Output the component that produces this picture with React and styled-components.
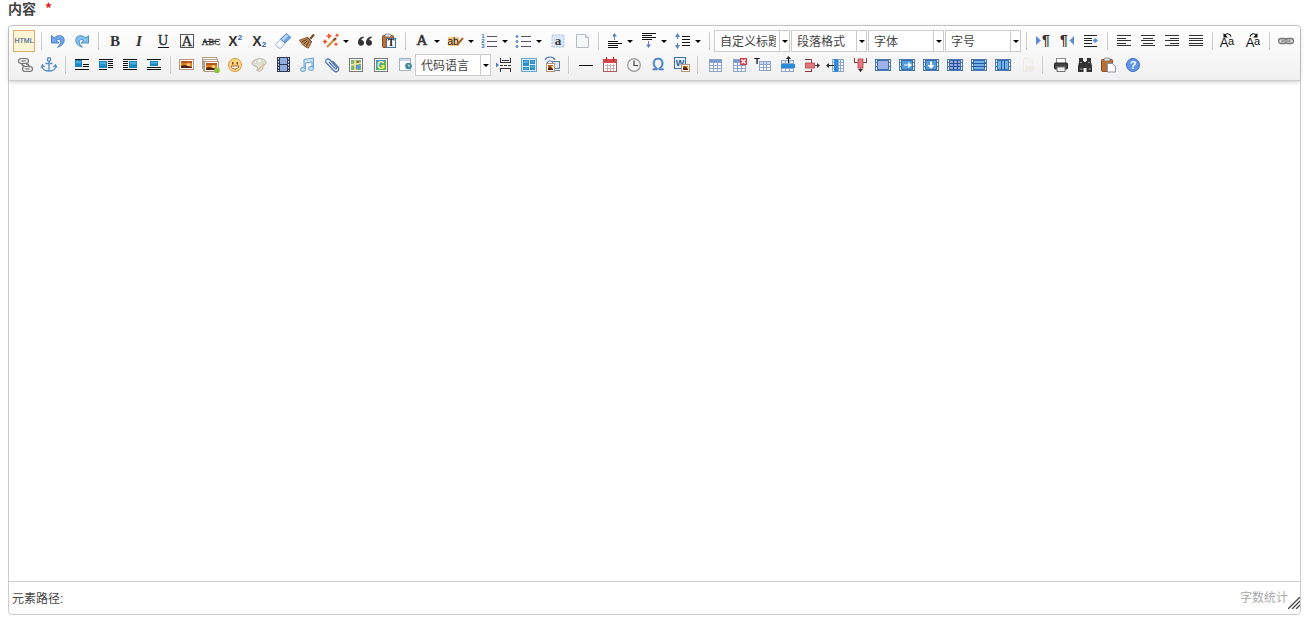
import React from "react";
import styled, { createGlobalStyle } from "styled-components";

const sans = '"Liberation Sans", "Noto Sans CJK SC", sans-serif';
const serif = "Liberation Serif, serif";

const GlobalStyle = createGlobalStyle`
  *, *::before, *::after { box-sizing: border-box; }
  body { margin: 0; background: #fff; color: #444; font: 12px/16px ${sans}; }
`;

const Page = styled.main`
  display: flex;
  flex-direction: column;
  min-height: 100vh;
  padding: 0 5px 5px 8px;
`;

const FieldLabel = styled.label`
  margin-bottom: 9px;
  font: bold 14px/16px "Noto Sans CJK SC", sans-serif;
  color: #444;
`;

const Required = styled.span`
  margin-left: 9px;
  color: #e02020;
`;

const Editor = styled.section`
  display: flex;
  flex: 1;
  flex-direction: column;
  border: 1px solid #ccc;
  border-radius: 4px;
`;

const Toolbar = styled.div`
  display: flex;
  flex-wrap: wrap;
  padding: 3px 2px 3px 4px;
  border-bottom: 1px solid #ccc;
  border-radius: 4px 4px 0 0;
  background: linear-gradient(#fff, #f0f0f0);
  box-shadow: 0 1px 4px rgba(0, 0, 0, 0.2);
`;

const ToolButton = styled.button`
  display: flex;
  align-items: center;
  justify-content: center;
  width: ${(p) => (p.$active ? "22px" : p.$menu ? "34px" : "24px")};
  height: ${(p) => (p.$active ? "22px" : "24px")};
  margin: ${(p) => (p.$active ? "1px 2px 1px 0" : "0")};
  padding: 0;
  border: ${(p) => (p.$active ? "1px solid #dcac6c" : "0")};
  background: ${(p) => (p.$active ? "#fff5d4" : "transparent")};
`;

const Glyph = styled.svg`
  display: block;
  flex: none;
  width: 20px;
  height: 20px;
  overflow: visible;
`;

const Caret = styled.span`
  width: 6px;
  margin: 1px 2px 0 2px;
  border: solid transparent;
  border-width: 3px 3px 0;
  border-top-color: #000;
`;

const Separator = styled.span`
  width: 1px;
  height: 18px;
  margin: 3px 4px;
  background: #ccc;
`;

const Combo = styled.span`
  display: grid;
  width: 76px;
  height: 22px;
  margin: 1px 1px 1px 0;
  border: 1px solid #ccc;
  background: #fff;
`;

const ComboSelect = styled.select`
  grid-area: 1 / 1;
  width: 100%;
  height: 20px;
  padding: 1px 13px 0 5px;
  border: 0;
  appearance: none;
  background: #fff;
  color: #444;
  font: 12px/18px ${sans};
  text-overflow: clip;
`;

const ComboArrow = styled.span`
  display: flex;
  grid-area: 1 / 1;
  align-items: center;
  justify-content: center;
  justify-self: end;
  width: 10px;
  border-left: 1px solid #ccc;
  pointer-events: none;

  ${Caret} { margin: 0; }
`;

const Content = styled.textarea`
  flex: 1;
  width: 100%;
  min-height: 200px;
  padding: 8px;
  border: 0;
  outline: 0;
  background: transparent;
  resize: none;
  font: 16px/24px ${sans};
`;

const StatusBar = styled.footer`
  display: flex;
  justify-content: space-between;
  height: 33px;
  padding: 0 0 0 3px;
  border-top: 1px solid #ccc;
`;

const ElementPath = styled.span`
  line-height: 34px;
`;

const StatusEnd = styled.div`
  display: flex;
  align-items: flex-end;
  color: #aaa;
`;

const WordCount = styled.span`
  align-self: flex-start;
  line-height: 32px;
`;

const Grip = styled.svg`
  width: 12px;
  height: 12px;
  margin-bottom: 5px;
`;

/* Drawing helpers shared by the toolbar glyphs */
const Lines = ({ d, c = "#333" }) => (
  <path d={d} stroke={c} fill="none" shapeRendering="crispEdges" />
);
const Letter = ({ x = 10, y = 15, s = 15, c = "#333", f = serif, children, ...rest }) => (
  <text x={x} y={y} fontSize={s} fill={c} fontFamily={f} textAnchor="middle" fontWeight="bold" {...rest}>
    {children}
  </text>
);
const Block = ({ x, y, w, h, c = "#1b87c4" }) => (
  <>
    <rect x={x} y={y} width={w} height={h} fill={c} />
    <rect x={x + 1} y={y + 1} width={w - 2} height={h / 3} fill="#6cc6f0" opacity=".6" />
  </>
);
const Grid = ({ x = 4, y = 4, w = 12, h = 12, cols = 3, rows = 4, head = "#6d96cf" }) => {
  const v = Array.from({ length: cols + 1 }, (_, i) => `M${x + Math.round((w * i) / cols) + 0.5} ${y}v${h + 1}`);
  const r = Array.from({ length: rows + 1 }, (_, i) => `M${x} ${y + Math.round((h * i) / rows) + 0.5}h${w + 1}`);
  return (
    <>
      <rect x={x} y={y} width={w + 1} height={h + 1} fill="#fff" />
      <rect x={x} y={y} width={w + 1} height="3" fill={head} />
      <Lines c="#8ca5cb" d={[...v, ...r].join("")} />
    </>
  );
};
const Film = ({ children, fill = "#8fb9ec" }) => (
  <g transform="translate(1 0)">
    <rect x="2" y="4" width="16" height="12" fill="#eef5fc" />
    <Lines c="#4a78b4" d="M2 4.5h16M2 7.5h2M2 11.5h2M2 15.5h16M16 7.5h2M16 11.5h2M2.5 4v12M17.5 4v12M7.500 4v2M12.500 4v2" />
    <rect x="4.5" y="5.5" width="11" height="9" fill={fill} stroke="#3b6da8" />
    {children}
  </g>
);
const Picture = ({ x = 3, y = 4, w = 15, h = 11 }) => (
  <>
    <rect x={x + 0.5} y={y + 0.5} width={w - 1} height={h - 1} fill="#fff" stroke="#b9937a" />
    <rect x={x + 2} y={y + 2} width={w - 4} height={h - 4} fill="#e0801f" />
    <rect x={x + 2} y={y + 2} width={w - 4} height="2" fill="#b4581c" />
    <circle cx={x + w / 2 + 2} cy={y + h / 2} r="1.6" fill="#ffe08a" />
    <path d={`M${x + 2} ${y + h - 4}l3 -1l${w - 7} 2v1h${4 - w}z`} fill="#4b2010" />
  </>
);
const Clipboard = (
  <>
    <rect x="3.5" y="4.5" width="11" height="12" rx="1" fill="#b96d37" stroke="#8b4c22" />
    <rect x="6" y="3" width="6" height="3" rx="1" fill="#ddd" stroke="#777" strokeWidth=".7" />
  </>
);
const LinkShape = () => (
  <g fill="none" stroke="#777" strokeWidth="1.3">
    <rect x="2.5" y="7.5" width="8" height="5" rx="2.5" fill="#ddd" />
    <rect x="9.5" y="7.5" width="8" height="5" rx="2.5" fill="#ddd" />
    <path d="M5.500 10h9" strokeWidth="2.4" />
    <path d="M6 10h8" stroke="#ddd" strokeWidth=".8" />
  </g>
);
const CaseLetters = () => (
  <>
    <Letter x={7} y={16} s={13} c="#111" fontWeight="400" f="Liberation Sans">A</Letter>
    <Letter x={14} y={14} s={11} c="#111" fontWeight="400" f="Liberation Sans">a</Letter>
  </>
);
const TurnArrow = ({ fill, edge }) => (
  <path d="M3.500 4.500v7.500h7.500L8.300 9.400C10 8 12.700 8.300 12.700 10.500c0 2-1 3.800-3.200 5.700 4.500-1.200 7-4.200 6.700-7.700C15.800 4.500 10.500 3 6 7z" fill={fill} stroke={edge} strokeWidth=".8" />
);

const art = {
  source: <Letter y={12} s={7} c="#4f7396" f="Liberation Sans" fontWeight="400" stroke="#4f7396" strokeWidth=".2">HTML</Letter>,
  undo: <TurnArrow fill="#6fa8ea" edge="#3471bd" />,
  redo: (
    <g transform="matrix(-1 0 0 1 20 0)">
      <TurnArrow fill="#86c2ee" edge="#2f7fbd" />
    </g>
  ),
  bold: <Letter>B</Letter>,
  italic: <Letter fontStyle="italic">I</Letter>,
  underline: (
    <>
      <Letter y={14} s={14} fontWeight="400" stroke="#333" strokeWidth=".4">U</Letter>
      <Lines c="#111" d="M5 16.500h11" />
    </>
  ),
  fontborder: (
    <>
      <rect x="3.500" y="3.500" width="13" height="13" fill="none" stroke="#555" />
      <Letter y={15} s={15} fontWeight="400" stroke="#333" strokeWidth=".4">A</Letter>
    </>
  ),
  strike: (
    <>
      <Letter y={14} s={9} fontWeight="400" stroke="#333" strokeWidth=".3">ABC</Letter>
      <Lines d="M2 10.500h16" />
    </>
  ),
  sup: (
    <>
      <Letter x={8} y={15} s={14} f="Liberation Sans">X</Letter>
      <Letter x={15} y={9} s={8} c="#2f5da8" f="Liberation Sans">2</Letter>
    </>
  ),
  sub: (
    <>
      <Letter x={8} y={15} s={14} f="Liberation Sans">X</Letter>
      <Letter x={15} y={16} s={8} c="#2f5da8" f="Liberation Sans">2</Letter>
    </>
  ),
  eraser: (
    <g strokeWidth=".8">
      <path d="M2.500 13.500l5-5.500 4.500 4-4 5H5z" fill="#f6f9fd" stroke="#8aa5c8" />
      <path d="M7.500 8l6-5.500 4.500 4-6 5.500z" fill="#6aa0e2" stroke="#4d80c0" />
      <path d="M8.500 8l5-4.500 2 1.500-5 5z" fill="#b4d4f8" />
    </g>
  ),
  broom: (
    <g>
      <path d="M13 8l4-4.500" stroke="#7b4a22" strokeWidth="2.200" />
      <path d="M10 6.500l4.500 4.500-3 6C8 16.500 4.500 13 2.500 9z" fill="#b98650" stroke="#7b4a22" strokeWidth=".8" />
      <path d="M10 6l5 5M4.500 11l5-2.500M6.500 13.500l4-4M9 15.500l3-5" stroke="#5f3718" strokeWidth=".9" />
    </g>
  ),
  wand: (
    <g>
      <path d="M6 16L14 8" stroke="#d68c3c" strokeWidth="2.200" />
      <path d="M12.500 9.500L15 7" stroke="#8a4f29" strokeWidth="2.400" />
      <path d="M8 2l1.200 2.200 2.300.8-2.300 1L8 8.200 6.800 6 4.500 5l2.300-.8zM4 8l1 1.800 1.800.7-1.800 1L4 13.500l-1-2-1.800-1 1.800-.7zM16 2l.8 1.500 1.500.7-1.500.8L16 6.500 15.200 5l-1.500-.8 1.500-.7zM15 11l.8 1.500 1.500.7-1.500.8-.8 1.500-.8-1.500-1.500-.8 1.500-.7z" fill="#f0552c" />
    </g>
  ),
  quote: (
    <path d="M8.500 5.500C5 6 3 8.500 3 11.500c0 2 1.200 3.200 3 3.200s3-1.300 3-3-1.200-2.700-2.700-2.700C6.500 7.800 7.500 7 9 6.500zM16.500 5.500c-3.500.5-5.500 3-5.500 6 0 2 1.200 3.200 3 3.200s3-1.300 3-3-1.200-2.700-2.700-2.700c.2-1.200 1.200-2 2.700-2.500z" fill="#333" />
  ),
  pastetext: (
    <>
      {Clipboard}
      <rect x="7.500" y="7.500" width="9" height="9" fill="#fff" stroke="#466fa0" />
      <Letter x={12} y={15} s={10} c="#111">T</Letter>
    </>
  ),
  forecolor: <Letter y={14} s={15} fontWeight="400" stroke="#333" strokeWidth=".6">A</Letter>,
  backcolor: (
    <>
      <rect x="2" y="6" width="11" height="9" fill="#fbc98e" />
      <Letter x={7} y={14} s={10} f="Liberation Sans" c="#111" fontWeight="400">ab</Letter>
      <path d="M11 14l6-7" stroke="#a8622e" strokeWidth="2" />
    </>
  ),
  ordered: (
    <>
      <Letter x={3} y={7} s={6} f="Liberation Sans" c="#2b6fc7">1</Letter>
      <Letter x={3} y={12} s={6} f="Liberation Sans" c="#2b6fc7">2</Letter>
      <Letter x={3} y={17} s={6} f="Liberation Sans" c="#2b6fc7">3</Letter>
      <Lines c="#556" d="M7 5.500h10M7 10.500h10M7 15.500h10" />
    </>
  ),
  unordered: (
    <>
      <g fill="#9fc0ee" stroke="#4a78bd"><circle cx="3" cy="5.500" r="1" /><circle cx="3" cy="10.500" r="1" /><circle cx="3" cy="15.500" r="1" /></g>
      <Lines c="#556" d="M7 5.500h10M7 10.500h10M7 15.500h10" />
    </>
  ),
  selectall: (
    <>
      <rect x="4" y="4" width="12" height="12" fill="#dce8fa" stroke="#a5bfe8" strokeDasharray="2 1" />
      <Letter y={14} s={13}>a</Letter>
    </>
  ),
  cleardoc: (
    <>
      <path d="M4.500 3.500h9l3 3v10h-12z" fill="#f6f7f9" stroke="#b4bac4" />
      <path d="M13.500 3.500v3h3" fill="#dde2ea" stroke="#b4bac4" />
    </>
  ),
  rowtop: (
    <>
      <path d="M9.500 2L7 5.500h5z" fill="#5d80be" />
      <Lines c="#5d80be" d="M9.500 5v4" />
      <Lines c="#111" d="M3 10.500h10M3 12.500h14M3 14.500h10M3 16.500h10" />
    </>
  ),
  rowbottom: (
    <>
      <Lines c="#111" d="M3 2.500h14M3 4.500h10M3 6.500h14M3 8.500h10" />
      <Lines c="#5d80be" d="M9.500 10v4" />
      <path d="M9.500 17L7 13.500h5z" fill="#5d80be" />
    </>
  ),
  lineheight: (
    <>
      <Lines c="#5d80be" d="M4.500 5v3M4.500 12v3" />
      <path d="M4.500 2L2 6h5zM4.500 18L2 14h5z" fill="#5d80be" />
      <Lines c="#111" d="M9 5.500h8M9 8.500h8M9 11.500h8M9 14.500h8" />
    </>
  ),
  ltr: (
    <>
      <path d="M3 5v9l5-4.500z" fill="#5b8cd8" />
      <Letter x={13} y={14} s={14} f="Liberation Sans">¶</Letter>
    </>
  ),
  rtl: (
    <>
      <Letter x={7} y={14} s={14} f="Liberation Sans">¶</Letter>
      <path d="M17 5v9l-4.500-4.500z" fill="#5b8cd8" />
    </>
  ),
  indent: (
    <>
      <Lines c="#222" d="M3 4.500h13M3 7.500h8M3 9.500h8M3 12.500h8M3 15.500h13" />
      <path d="M12 8.500h1.500V6.500l3.500 3-3.500 3v-2H12z" fill="#5b8cd8" />
    </>
  ),
  left: <Lines d="M3 4.500h14M3 7.500h9M3 9.500h14M3 12.500h9M3 14.500h14" />,
  center: <Lines d="M3 4.500h14M5 7.500h10M3 9.500h14M5 12.500h10M3 14.500h14" />,
  right: <Lines d="M3 4.500h14M8 7.500h9M3 9.500h14M8 12.500h9M3 14.500h14" />,
  justify: <Lines d="M3 4.500h14M3 7.500h14M3 9.500h14M3 12.500h14M3 14.500h14" />,
  upper: (
    <g transform="translate(-2 0)">
      <CaseLetters />
      <path d="M14 5.500C13 2 9 2 8 4.500" fill="none" stroke="#111" strokeWidth="1.200" />
      <path d="M6.500 2v4.500H11z" fill="#111" />
    </g>
  ),
  lower: (
    <>
      <CaseLetters />
      <path d="M7 5.500C8 2 12 2 13 4.500" fill="none" stroke="#111" strokeWidth="1.200" />
      <path d="M14.500 2v4.500H10z" fill="#111" />
    </>
  ),
  link: <LinkShape />,
  unlink: (
    <g fill="none" stroke="#777" strokeWidth="1.100">
      <rect x="3.500" y="3.500" width="10" height="5" rx="2.500" fill="#e4e4e4" />
      <path d="M6.500 6h4" />
      <rect x="7.500" y="11.500" width="10" height="5" rx="2.500" fill="#e4e4e4" />
      <path d="M10.500 14h4" />
      <path d="M7 8.500c0 2 1 2.500 2.500 2.500M11 9c2 0 3 .5 3 2.500" strokeWidth="1.500" />
    </g>
  ),
  anchor: (
    <g fill="none" stroke="#5b90ca" strokeWidth="1.400">
      <circle cx="10" cy="4.500" r="1.700" />
      <path d="M10 6v10.500M6.500 8.500h7M3 10.500c0 7.500 14 7.500 14 0M2 12.500l1.500-2.500 2 2M18 12.500L16.500 10l-2 2" />
    </g>
  ),
  imgnone: (
    <>
      <Lines c="#111" d="M3 4.500h14M3 14.500h14M11 9.500h6M11 11.500h6" />
      <Block x={3} y={5} w={7} h={7} />
    </>
  ),
  imgleft: (
    <>
      <Lines c="#111" d="M3 4.500h14M12 6.500h5M12 8.500h5M12 10.500h5M12 12.500h5M3 14.500h8" />
      <Block x={3} y={6} w={8} h={7} />
    </>
  ),
  imgright: (
    <>
      <Lines c="#111" d="M3 4.500h14M3 6.500h5M3 8.500h5M3 10.500h5M3 12.500h5M3 14.500h14" />
      <Block x={9} y={6} w={8} h={7} />
    </>
  ),
  imgcenter: (
    <>
      <Lines c="#111" d="M3 4.500h14M3 12.500h14M3 14.500h14" />
      <Block x={6} y={6} w={8} h={5} />
    </>
  ),
  image: <Picture x={2} />,
  images: (
    <>
      <rect x="1.500" y="2.500" width="14" height="11" fill="#fff" stroke="#b5a08c" />
      <rect x="2.500" y="4.500" width="14" height="11" fill="#fff" stroke="#b5a08c" />
      <Picture x={3} y={6} w={15} h={11} />
      <circle cx="16" cy="15.500" r="2.800" fill="#8cc63e" />
    </>
  ),
  emotion: (
    <>
      <circle cx="10" cy="10" r="6.500" fill="#fcd588" stroke="#df953d" />
      <rect x="7" y="7" width="1.500" height="2.500" fill="#8a4a15" /><rect x="11.500" y="7" width="1.500" height="2.500" fill="#8a4a15" />
      <path d="M6 11c1 4 7 4 8 0z" fill="#fff" stroke="#9a5820" strokeWidth=".9" />
    </>
  ),
  scrawl: (
    <>
      <path d="M3 8c1-5 13-6 14-1 1 3-3 3-3 5s-2 5-5 4 1-3-1-4-5-1-5-4z" fill="#e0e0d6" stroke="#b5b3a5" />
      <circle cx="6.500" cy="7.500" r="1.300" fill="#fff" stroke="#bba" strokeWidth=".6" /><circle cx="10.500" cy="6" r="1.300" fill="#fff" />
      <circle cx="14" cy="7.500" r="1.300" fill="#cfe2b8" />
      <path d="M9 15l6-6" stroke="#d9c28c" strokeWidth="1.500" />
    </>
  ),
  video: (
    <>
      <rect x="4" y="2" width="13" height="15" fill="#2f3a52" />
      <rect x="7" y="3" width="7" height="6" fill="#91ace0" /><rect x="7" y="10" width="7" height="6" fill="#91ace0" />
      <path d="M5.500 3v13M15.500 3v13" stroke="#fff" strokeDasharray="1.500 1.500" />
    </>
  ),
  music: (
    <g fill="#c7e2f7" stroke="#6aa3d6">
      <path d="M7 14V4.500L16.500 3v10H15V7L8.500 8v6z" />
      <ellipse cx="6" cy="14.500" rx="2.500" ry="2" /><ellipse cx="14" cy="13.500" rx="2.500" ry="2" />
    </g>
  ),
  attachment: (
    <path d="M8 7l6 6.500c1 1 2.500-.2 1.500-1.500L9 5C6.500 2.500 3 5.500 5.500 8l7 7.500c3 3 7-.5 4.500-3.500L11.500 6" fill="none" stroke="#5276b8" strokeWidth="1.300" />
  ),
  map: (
    <>
      <rect x="4.500" y="3.500" width="13" height="13" fill="#fff" stroke="#777" />
      <rect x="6" y="5" width="10" height="10" fill="#7fb56a" />
      <path d="M6 10l10-2M10 5v10" stroke="#f6e6a0" strokeWidth="1.500" /><rect x="11" y="10" width="4" height="4" fill="#5a9ad1" />
      <rect x="12" y="6" width="2" height="2" fill="#c55" />
    </>
  ),
  gmap: (
    <>
      <rect x="5.500" y="3.500" width="13" height="13" fill="#fff" stroke="#777" />
      <rect x="7" y="5" width="10" height="10" fill="#3f9bd8" /><path d="M17 5v10H7z" fill="#56b848" />
      <Letter x={12} y={14} s={10} c="#fff27a" f="Liberation Sans">G</Letter>
    </>
  ),
  frame: (
    <>
      <rect x="6.500" y="3.500" width="11" height="12" fill="#fff" stroke="#a5b5c8" />
      <rect x="7" y="4" width="10" height="2" fill="#c8d8ea" />
      <circle cx="15.500" cy="11" r="3.300" fill="#3f87a5" /><path d="M14.500 9l2.500 1-1 3z" fill="#b4dc9a" />
    </>
  ),
  pagebreak: (
    <>
      <path d="M2 7.500v5l3-2.500z" fill="#4d7bc0" />
      <Lines c="#333" d="M6.500 3v4.500h10V3M6 10.500h3M10 10.500h3M14 10.500h3M6.500 17v-3.500h10V17M8 5.500h7" />
    </>
  ),
  template: (
    <>
      <rect x="3.500" y="3.500" width="15" height="13" fill="#d8edfb" stroke="#6ba6d6" />
      <Block x={5} y={5} w={6} h={6} c="#338fc8" /><Block x={12} y={5} w={5} h={4} c="#338fc8" />
      <Block x={5} y={12} w={6} h={3} c="#338fc8" /><Block x={12} y={10} w={5} h={5} c="#338fc8" />
    </>
  ),
  background: (
    <>
      <path d="M3 5c2-4 8-4 10 0M5 8c1-3 5-3 6 0" fill="none" stroke="#4f79b8" strokeWidth="1.200" />
      <rect x="10.500" y="6.500" width="7" height="7" fill="#dbe8f8" stroke="#687fa8" />
      <Lines c="#687fa8" d="M12 15.500h6" />
      <Picture x={4} y={8} w={9} h={9} />
    </>
  ),
  hr: <Lines c="#111" d="M4 10.500h14" />,
  date: (
    <>
      <rect x="4.500" y="4.500" width="13" height="12" fill="#fff" stroke="#b05a5a" />
      <rect x="4" y="4" width="14" height="4" fill="#d9434b" />
      <Lines c="#c3b0b0" d="M6 10.500h10M6 13.500h10M8.500 9v7M11.500 9v7M14.500 9v7" />
      <path d="M7.500 2v4M14.500 2v4" stroke="#933" strokeWidth="1.200" />
    </>
  ),
  time: (
    <>
      <circle cx="11" cy="10" r="6.300" fill="#f2f2f2" stroke="#999" strokeWidth="1.200" />
      <path d="M11 5.500v5h4" fill="none" stroke="#444" strokeWidth="1.200" />
    </>
  ),
  special: <Letter x={11} y={15} s={16} c="#4a82c6" f="Liberation Sans" fontWeight="400" stroke="#4a82c6" strokeWidth=".4">Ω</Letter>,
  word: (
    <>
      <rect x="3.500" y="2.500" width="11" height="11" fill="#e7f1fa" stroke="#3f72a8" />
      <Letter x={9} y={11} s={9} c="#1f5a9b" f="Liberation Sans">W</Letter>
      <Picture x={10} y={9} w={9} h={8} />
    </>
  ),
  table: <Grid x={5} />,
  deltable: (
    <>
      <Grid x={5} />
      <rect x="12" y="3" width="7" height="7" fill="#d93646" /><path d="M13.500 4.500l4 4M17.500 4.500l-4 4" stroke="#fff" strokeWidth="1.500" />
    </>
  ),
  titlerow: (
    <>
      <Grid x={7} y={6} w={11} h={9} rows={3} head="#c8d8f0" />
      <Letter x={5} y={9} s={9} c="#111" f="Liberation Sans">T</Letter>
    </>
  ),
  insrow: (
    <>
      <Grid x={5} y={5} h={11} rows={4} head="#e4edf8" />
      <rect x="5" y="9" width="14" height="4" fill="#2a8bdc" />
      <path d="M12.500 1L10 4h5z" fill="#222" /><Lines c="#222" d="M12.500 3v5" />
    </>
  ),
  delrow: (
    <>
      <Lines c="#8a3a40" d="M5 4.500h6v3M5 16.500h6v-3M15 10.500h4" />
      <rect x="5.500" y="8" width="9" height="5" fill="#e4767c" stroke="#b0444b" strokeWidth=".8" />
      <path d="M17 8l3 2.500-3 2.500z" fill="#333" />
    </>
  ),
  inscol: (
    <>
      <Grid x={8} w={11} cols={4} head="#e4edf8" />
      <rect x="10" y="4" width="4" height="13" fill="#2a8bdc" />
      <Lines c="#222" d="M4 10.500h6" /><path d="M2 10.500L5 8v5z" fill="#222" />
    </>
  ),
  delcol: (
    <>
      <Lines c="#8a3a40" d="M6.500 3v4h4M18.500 3v4h-4M12.500 13v4" />
      <rect x="10" y="4" width="5" height="9" fill="#e4767c" stroke="#b0444b" strokeWidth=".8" />
      <path d="M10 14h5l-2.500 3z" fill="#333" />
    </>
  ),
  merge: <Film fill="#a0b2ec" />,
  mergeright: <Film fill="#4f9cdc"><path d="M7 9.500h4V7l4 3-4 3v-2.500H7z" fill="#fff" /></Film>,
  mergedown: <Film fill="#4f9cdc"><path d="M9 6.500h2V10h2.500L10 14l-3.500-4H9z" fill="#fff" /></Film>,
  splitcells: <Film fill="#8fa7e8"><Lines c="#2c4f92" d="M5 8.500h10M5 11.500h10M8.500 5v10M12.500 5v10" /></Film>,
  splitrows: <Film fill="#72b1ed"><Lines c="#245f9c" d="M3 8.500h14M3 11.500h14" /></Film>,
  splitcols: <Film fill="#72b1ed"><Lines c="#245f9c" d="M8.500 5v10M11.500 5v10" /></Film>,
  charts: (
    <g opacity=".35">
      <path d="M7.500 3.500h6l3 3v10h-9z" fill="#f6f6f0" stroke="#ddd" />
      <rect x="9" y="11" width="9" height="5" fill="#e3dfc8" />
    </g>
  ),
  print: (
    <>
      <rect x="7.500" y="3.500" width="9" height="5" fill="#fff" stroke="#888" />
      <rect x="5.500" y="8" width="13" height="6" rx="1" fill="#444" stroke="#222" />
      <rect x="8" y="12" width="8" height="4.500" fill="#eee" stroke="#777" />
    </>
  ),
  search: (
    <g transform="translate(1 0)">
      <path d="M5 3h4v3h1v1h2V6h1V3h4v4l1 4v6h-5.500v-4h-3v4H4v-6l1-4z" fill="#333" />
      <path d="M6 7.500h2M14 7.500h2M6 14h2.500M14.500 14H17" stroke="#999" />
    </g>
  ),
  paste: (
    <g transform="translate(1 0)">
      {Clipboard}
      <path d="M9.500 8.500h5l3 3v5.500h-8z" fill="#fff" stroke="#8795a8" />
    </g>
  ),
  help: (
    <>
      <circle cx="12" cy="10" r="6.500" fill="#5f95e8" stroke="#3f6fc4" />
      <Letter x={12} y={14} s={11} c="#fff" f="Liberation Sans">?</Letter>
    </>
  ),
};

/* "|" is a divider, a trailing "+" marks a button that opens a menu, [..] is a drop-down */
const tools = [
  "source", "|", "undo", "redo", "|",
  "bold", "italic", "underline", "fontborder", "strike", "sup", "sub", "eraser", "broom", "wand+", "quote", "pastetext", "|",
  "forecolor+", "backcolor+", "ordered+", "unordered+", "selectall", "cleardoc", "|",
  "rowtop+", "rowbottom+", "lineheight+", "|",
  ["自定义标题"], ["段落格式"], ["字体"], ["字号"], "|",
  "ltr", "rtl", "indent", "|", "left", "center", "right", "justify", "|", "upper", "lower", "|",
  "link", "unlink", "anchor", "|", "imgnone", "imgleft", "imgright", "imgcenter", "|",
  "image", "images", "emotion", "scrawl", "video", "music", "attachment", "map", "gmap", "frame", ["代码语言"],
  "pagebreak", "template", "background", "|", "hr", "date", "time", "special", "word", "|",
  "table", "deltable", "titlerow", "insrow", "delrow", "inscol", "delcol", "merge", "mergeright", "mergedown",
  "splitcells", "splitrows", "splitcols", "charts", "|", "print", "search", "paste", "help",
];

function Tool({ item }) {
  if (item === "|") return <Separator />;
  if (Array.isArray(item)) {
    return (
      <Combo>
        <ComboSelect aria-label={item[0]}>
          <option>{item[0]}</option>
        </ComboSelect>
        <ComboArrow><Caret /></ComboArrow>
      </Combo>
    );
  }
  const menu = item.endsWith("+");
  const name = menu ? item.slice(0, -1) : item;
  return (
    <ToolButton type="button" aria-label={name} $menu={menu} $active={name === "source"}>
      <Glyph viewBox="0 0 20 20">{art[name]}</Glyph>
      {menu && <Caret />}
    </ToolButton>
  );
}

export default function App() {
  return (
    <Page>
      <GlobalStyle />
      <FieldLabel htmlFor="content">
        内容<Required>*</Required>
      </FieldLabel>
      <Editor>
        <Toolbar role="toolbar">
          {tools.map((item, i) => <Tool key={i} item={item} />)}
        </Toolbar>
        <Content id="content" />
        <StatusBar>
          <ElementPath>元素路径:</ElementPath>
          <StatusEnd>
            <WordCount>字数统计</WordCount>
            <Grip viewBox="0 0 12 12">
              <path d="M0 12L12 0M4 12l8-8M8 12l4-4" stroke="#444" strokeWidth="1.300" />
            </Grip>
          </StatusEnd>
        </StatusBar>
      </Editor>
    </Page>
  );
}
